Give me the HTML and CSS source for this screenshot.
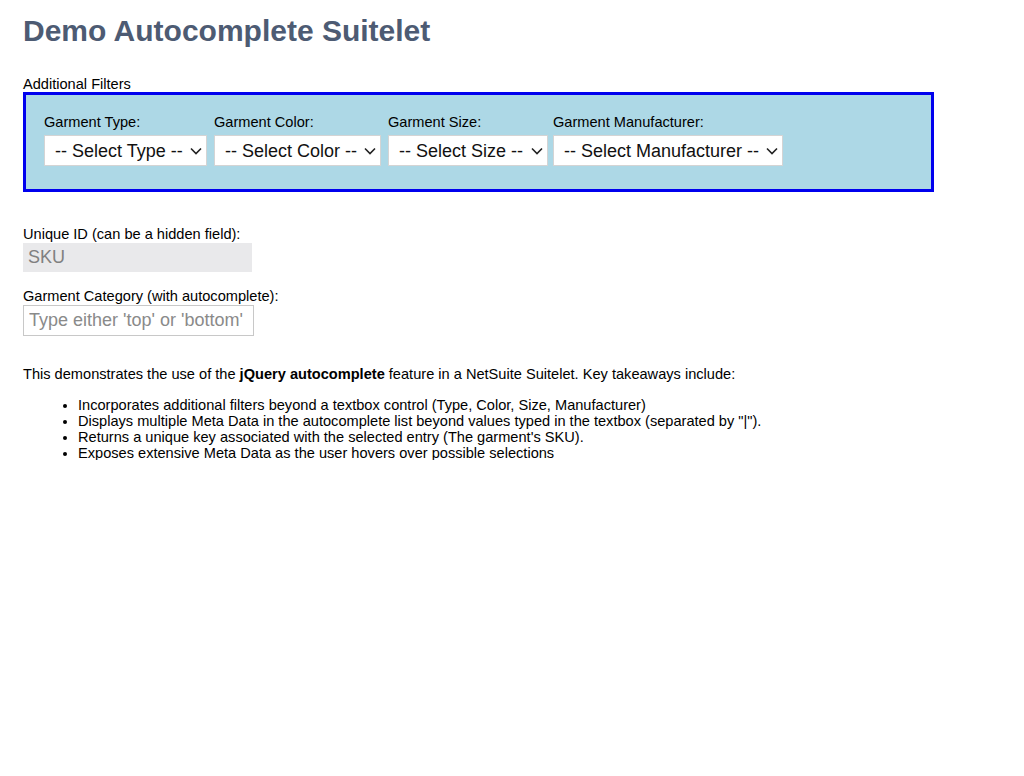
FILE: index.html
```html
<!DOCTYPE html>
<html lang="en">
<head>
    <meta charset="UTF-8">
    <title>Demo Autocomplete Suitelet</title>
    <link rel="stylesheet" href="styles.css">
</head>
<body>

    <div class="page">
        <h1 class="title">Demo Autocomplete Suitelet</h1>

        <!-- Filtry -->
        <div class="filters-label">Additional Filters</div>
        <div class="filters">
            <div class="filter filter-type">
                <label for="type">Garment Type:</label>
                <select id="type" class="select select-type">
                    <option>-- Select Type --</option>
                </select>
            </div>
            <div class="filter filter-color">
                <label for="color">Garment Color:</label>
                <select id="color" class="select select-color">
                    <option>-- Select Color --</option>
                </select>
            </div>
            <div class="filter filter-size">
                <label for="size">Garment Size:</label>
                <select id="size" class="select select-size">
                    <option>-- Select Size --</option>
                </select>
            </div>
            <div class="filter">
                <label for="manufacturer">Garment Manufacturer:</label>
                <select id="manufacturer" class="select select-manufacturer">
                    <option>-- Select Manufacturer --</option>
                </select>
            </div>
        </div>

        <!-- Pola -->
        <div class="field field-first">
            <label for="sku">Unique ID (can be a hidden field):</label>
            <input type="text" id="sku" class="input input-sku" value="SKU" readonly>
        </div>
        <div class="field">
            <label for="category">Garment Category (with autocomplete):</label>
            <input type="text" id="category" class="input input-category" placeholder="Type either 'top' or 'bottom'">
        </div>

        <!-- Opis -->
        <p class="intro">This demonstrates the use of the <strong>jQuery autocomplete</strong> feature in a NetSuite Suitelet. Key takeaways include:</p>
        <ul class="takeaways">
            <li>Incorporates additional filters beyond a textbox control (Type, Color, Size, Manufacturer)</li>
            <li>Displays multiple Meta Data in the autocomplete list beyond values typed in the textbox (separated by "|").</li>
            <li>Returns a unique key associated with the selected entry (The garment's SKU).</li>
            <li>Exposes extensive Meta Data as the user hovers over possible selections</li>
        </ul>
    </div>

</body>
</html>
```

FILE: styles.css
```css
body {
    margin: 0;
    font-family: "Liberation Sans", Arial, sans-serif;
    font-size: 14.6px;
    color: #000;
    background-color: #fff;
}
.page {
    padding: 0 23px;
    height: 460px;
    overflow: hidden;
}
.title {
    margin: 0;
    padding-top: 14px;
    font-size: 30px;
    line-height: 34px;
    color: #4d5b73;
}
.filters-label {
    margin-top: 28px;
    line-height: 16px;
}
.filters {
    display: flex;
    width: 887px;
    height: 94px;
    box-sizing: content-box;
    padding: 0 0 0 18px;
    border: 3px solid #0000ee;
    background-color: #add8e6;
}
.filter {
    display: flex;
    flex-direction: column;
    margin-top: 19px;
}
.filter-type {
    width: 170px;
}
.filter-color {
    width: 174px;
}
.filter-size {
    width: 165px;
}
.filter label {
    line-height: 16px;
    margin-bottom: 5px;
}
.select {
    appearance: none;
    -webkit-appearance: none;
    height: 31px;
    padding: 0 0 0 10px;
    border: 1px solid #d4d4d4;
    border-radius: 0;
    background-color: #fff;
    background-image: url("data:image/svg+xml,%3Csvg xmlns='http://www.w3.org/2000/svg' width='12' height='8' viewBox='0 0 12 8'%3E%3Cpath d='M1 1.5l5 5 5-5' fill='none' stroke='%23222' stroke-width='1.6'/%3E%3C/svg%3E");
    background-repeat: no-repeat;
    background-position: right 4px center;
    font-family: "Liberation Sans", Arial, sans-serif;
    font-size: 18px;
    color: #111;
}
.select-type {
    width: 163px;
}
.select-color {
    width: 167px;
}
.select-size {
    width: 160px;
}
.select-manufacturer {
    width: 230px;
}
.field {
    display: flex;
    flex-direction: column;
    align-items: flex-start;
    margin-top: 16px;
}
.field-first {
    margin-top: 34px;
}
.field label {
    line-height: 16px;
    margin-bottom: 1px;
}
.input {
    box-sizing: border-box;
    height: 29px;
    padding: 0 5px;
    font-family: "Liberation Sans", Arial, sans-serif;
    font-size: 18px;
    outline: none;
}
.input-sku {
    width: 229px;
    border: none;
    background-color: #e9e9eb;
    color: #808080;
}
.input-category {
    width: 231px;
    height: 31px;
    border: 1px solid #c8c8c8;
    background-color: #fff;
}
.input-category::placeholder {
    color: #8a8a8a;
}
.intro {
    margin: 30px 0 0 0;
    line-height: 16px;
}
.takeaways {
    margin: 15px 0 0 0;
    padding-left: 55px;
    line-height: 16px;
}
```
